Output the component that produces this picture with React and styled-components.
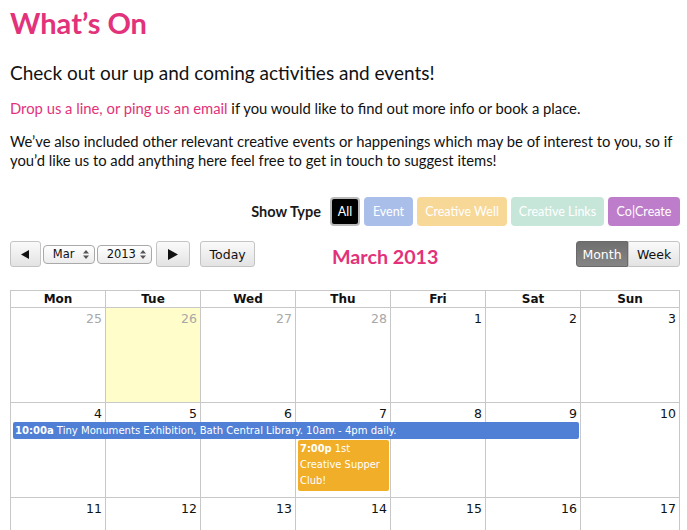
import React from "react";
import styled, { createGlobalStyle } from "styled-components";

const Global = createGlobalStyle`
  html, body { margin: 0; padding: 0; background: #fff; }
  body { font-family: Lato, "Open Sans", sans-serif; color: #1a1a1a; }
`;

const PINK = "#e2327a";

const Page = styled.div`
  width: 670px;
  margin-left: 10px;
  padding-top: 5px;
`;

const Title = styled.h1`
  margin: 0;
  font-size: 29px;
  line-height: 36px;
  font-weight: 700;
  color: ${PINK};
`;

const Lead = styled.h2`
  margin: 20px 0 0;
  font-size: 19px;
  line-height: 24px;
  font-weight: 400;
  color: #111;
`;

const Para = styled.p`
  margin: ${(p) => p.$mt || 0}px 0 0;
  font-size: 14.8px;
  line-height: 19px;
  color: #111;
`;

const Link = styled.a`
  color: ${PINK};
  text-decoration: none;
`;

const FilterRow = styled.div`
  margin-top: 27px;
  display: flex;
  justify-content: flex-end;
  align-items: center;
  gap: 4px;
  height: 29px;
`;

const FilterLabel = styled.span`
  font-size: 14.5px;
  font-weight: 700;
  margin-right: 5px;
`;

const TypeButton = styled.span`
  display: inline-flex;
  align-items: center;
  justify-content: center;
  width: ${(p) => p.$w}px;
  height: 29px;
  box-sizing: border-box;
  border-radius: 4px;
  background: ${(p) => p.$bg};
  color: #fff;
  font-size: 12.5px;
  white-space: nowrap;
  ${(p) => p.$active && `border: 2px solid #bbb; box-shadow: inset 0 0 0 1px #000;`}
`;

const Toolbar = styled.div`
  margin-top: 15px;
  display: flex;
  align-items: flex-start;
  height: 26px;
`;

const Left = styled.div`
  display: flex;
  align-items: center;
  width: 245px;
`;

const Right = styled.div`
  display: flex;
  margin-left: auto;
`;

const Btn = styled.span`
  display: inline-flex;
  align-items: center;
  justify-content: center;
  box-sizing: border-box;
  height: 26px;
  width: ${(p) => p.$w}px;
  margin-left: ${(p) => p.$ml || 0}px;
  border: 1px solid #c4c4c4;
  border-radius: 3px;
  background: linear-gradient(#fafafa, #e3e3e3);
  font-family: "DejaVu Sans", Verdana, sans-serif;
  font-size: 12.5px;
  color: #111;
`;

const SelectBox = styled.span`
  display: inline-flex;
  align-items: center;
  justify-content: space-between;
  box-sizing: border-box;
  height: 19px;
  width: ${(p) => p.$w}px;
  margin-left: ${(p) => p.$ml || 0}px;
  padding: 0 5px 0 9px;
  border: 1px solid #a9a9a9;
  border-radius: 4px;
  background: linear-gradient(#fff, #ececec);
  font-family: "DejaVu Sans", Verdana, sans-serif;
  font-size: 11.5px;
  color: #111;
`;

const MonthTitle = styled.h2`
  margin: 0 0 0 77px;
  padding-top: 6px;
  font-size: 19.7px;
  font-weight: 700;
  color: ${PINK};
  line-height: 20px;
`;

const Seg = styled.span`
  display: inline-flex;
  align-items: center;
  justify-content: center;
  box-sizing: border-box;
  height: 26px;
  width: ${(p) => p.$w}px;
  border: 1px solid ${(p) => (p.$on ? "#6a6a6a" : "#c4c4c4")};
  border-radius: ${(p) => (p.$first ? "3px 0 0 3px" : "0 3px 3px 0")};
  background: ${(p) => (p.$on ? "linear-gradient(#6f6f6f, #858585)" : "linear-gradient(#fafafa, #e3e3e3)")};
  color: ${(p) => (p.$on ? "#fff" : "#111")};
  font-family: "DejaVu Sans", Verdana, sans-serif;
  font-size: 12.5px;
`;

const Grid = styled.div`
  margin-top: 23px;
  border-top: 1px solid #c8c8c8;
  border-left: 1px solid #c8c8c8;
  font-family: "DejaVu Sans", Verdana, sans-serif;
`;

const cols = "repeat(6, 95px) 1fr";

const HeadRow = styled.div`
  display: grid;
  grid-template-columns: ${cols};
`;

const HeadCell = styled.div`
  height: 16px;
  border-right: 1px solid #c8c8c8;
  border-bottom: 1px solid #c8c8c8;
  text-align: center;
  font-size: 12px;
  font-weight: 700;
  line-height: 16px;
  color: #111;
`;

const Week = styled.div`
  display: grid;
  grid-template-columns: ${cols};
  grid-template-rows: 18px 18px auto;
  height: ${(p) => p.$h}px;
`;

const DayBg = styled.div`
  grid-row: 1 / -1;
  grid-column: ${(p) => p.$col};
  border-right: 1px solid #c8c8c8;
  border-bottom: 1px solid #c8c8c8;
  background: ${(p) => (p.$today ? "#fffdca" : "#fff")};
`;

const DayNum = styled.div`
  grid-row: 1;
  grid-column: ${(p) => p.$col};
  text-align: right;
  padding: 3px 4px 0 0;
  font-size: 12.5px;
  line-height: 15px;
  color: ${(p) => (p.$other ? "#a8a8a8" : "#111")};
  z-index: 1;
`;

const Event = styled.div`
  grid-row: ${(p) => p.$row};
  grid-column: ${(p) => p.$span};
  margin: ${(p) => p.$mt || 0}px 2px 0 2px;
  align-self: start;
  background: ${(p) => p.$bg};
  border-radius: 2px;
  color: #fff;
  font-family: "DejaVu Sans Condensed", "DejaVu Sans", sans-serif;
  font-stretch: condensed;
  font-size: ${(p) => p.$fs || 11.2}px;
  line-height: ${(p) => p.$lh || 17}px;
  padding: ${(p) => p.$pad || "0 2px"};
  white-space: ${(p) => (p.$wrap ? "normal" : "nowrap")};
  overflow: hidden;
  z-index: 1;
`;

const Time = styled.b`
  font-weight: 700;
  margin-right: 3px;
`;

const Arrows = () => (
  <svg width="6" height="9" viewBox="0 0 6 9">
    <path d="M3 0 L6 3.5 H0 Z M3 9 L6 5.5 H0 Z" fill="#555" />
  </svg>
);

const weeks = [
  [[25, true], [26, true, true], [27, true], [28, true], [1], [2], [3]],
  [[4], [5], [6], [7], [8], [9], [10]],
  [[11], [12], [13], [14], [15], [16], [17]],
];

const types = [
  ["All", "#000", 30, true],
  ["Event", "#a9bfea", 49],
  ["Creative Well", "#f8d897", 90],
  ["Creative Links", "#c7e6da", 93],
  ["Co|Create", "#bd7dca", 72],
];

export default function App() {
  return (
    <>
      <Global />
      <Page>
        <Title>What’s On</Title>
        <Lead>Check out our up and coming activities and events!</Lead>
        <Para $mt={14}>
          <Link href="#">Drop us a line, or ping us an email</Link> if you would like to find out more info or book a place.
        </Para>
        <Para $mt={14}>
          We’ve also included other relevant creative events or happenings which may be of interest to you, so if
          you’d like us to add anything here feel free to get in touch to suggest items!
        </Para>
        <FilterRow>
          <FilterLabel>Show Type</FilterLabel>
          {types.map(([label, bg, w, active]) => (
            <TypeButton key={label} $bg={bg} $w={w} $active={active}>{label}</TypeButton>
          ))}
        </FilterRow>
        <Toolbar>
          <Left>
            <Btn $w={31}>
              <svg width="8" height="9" viewBox="0 0 8 9"><path d="M0 4.5 L8 0 V9 Z" fill="#111" /></svg>
            </Btn>
            <SelectBox $w={52} $ml={2}>Mar <Arrows /></SelectBox>
            <SelectBox $w={56} $ml={2}>2013 <Arrows /></SelectBox>
            <Btn $w={34} $ml={4}>
              <svg width="10" height="11" viewBox="0 0 10 11"><path d="M0 0 L10 5.5 L0 11 Z" fill="#111" /></svg>
            </Btn>
            <Btn $w={55} $ml={10}>Today</Btn>
          </Left>
          <MonthTitle>March 2013</MonthTitle>
          <Right>
            <Seg $w={52} $on $first>Month</Seg>
            <Seg $w={52}>Week</Seg>
          </Right>
        </Toolbar>
        <Grid>
          <HeadRow>
            {["Mon", "Tue", "Wed", "Thu", "Fri", "Sat", "Sun"].map((d) => (
              <HeadCell key={d}>{d}</HeadCell>
            ))}
          </HeadRow>
          {weeks.map((w, wi) => (
            <Week key={wi} $h={95}>
              {w.map(([n, other, today], i) => (
                <DayBg key={"b" + i} $col={i + 1} $today={today} />
              ))}
              {w.map(([n, other], i) => (
                <DayNum key={"n" + i} $col={i + 1} $other={other}>{n}</DayNum>
              ))}
              {wi === 1 && (
                <>
                  <Event $row={2} $span="1 / 7" $bg="#5080d6" $mt={1}>
                    <Time>10:00a</Time>Tiny Monuments Exhibition, Bath Central Library. 10am - 4pm daily.
                  </Event>
                  <Event $row={3} $span="4 / 5" $bg="#f0ae29" $wrap $lh={16} $fs={11} $pad="1px 2px 2px" $mt={1}>
                    <Time>7:00p</Time><span>1st</span> <span>Creative Supper Club!</span>
                  </Event>
                </>
              )}
            </Week>
          ))}
        </Grid>
      </Page>
    </>
  );
}
